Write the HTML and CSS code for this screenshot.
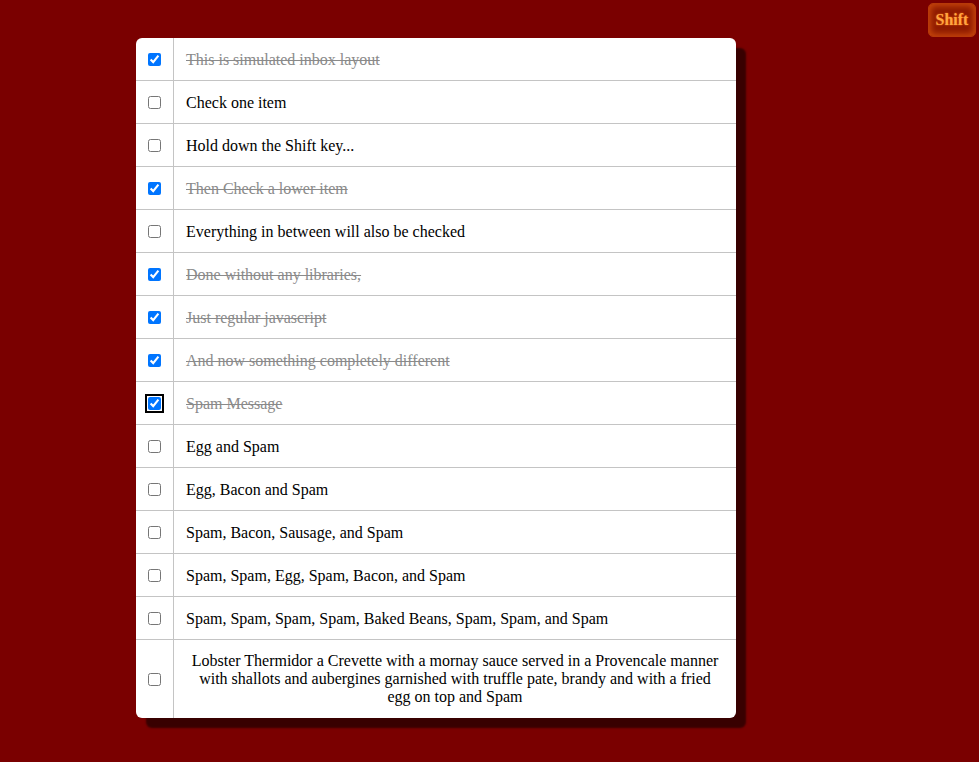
FILE: index.html
```html
<!DOCTYPE html>
<html>
<head>
<meta charset="utf-8">
<link rel="stylesheet" href="styles.css">
</head>
<body>
<div class="shift-key">Shift</div>
<div class="page">
  <div class="inbox">
    <div class="item"><div class="box"><input type="checkbox" checked></div><p>This is simulated inbox layout</p></div>
    <div class="item"><div class="box"><input type="checkbox"></div><p>Check one item</p></div>
    <div class="item"><div class="box"><input type="checkbox"></div><p>Hold down the Shift key...</p></div>
    <div class="item"><div class="box"><input type="checkbox" checked></div><p>Then Check a lower item</p></div>
    <div class="item"><div class="box"><input type="checkbox"></div><p>Everything in between will also be checked</p></div>
    <div class="item"><div class="box"><input type="checkbox" checked></div><p>Done without any libraries,</p></div>
    <div class="item"><div class="box"><input type="checkbox" checked></div><p>Just regular javascript</p></div>
    <div class="item"><div class="box"><input type="checkbox" checked></div><p>And now something completely different</p></div>
    <div class="item"><div class="box"><input type="checkbox" class="focused" checked></div><p>Spam Message</p></div>
    <div class="item"><div class="box"><input type="checkbox"></div><p>Egg and Spam</p></div>
    <div class="item"><div class="box"><input type="checkbox"></div><p>Egg, Bacon and Spam</p></div>
    <div class="item"><div class="box"><input type="checkbox"></div><p>Spam, Bacon, Sausage, and Spam</p></div>
    <div class="item"><div class="box"><input type="checkbox"></div><p>Spam, Spam, Egg, Spam, Bacon, and Spam</p></div>
    <div class="item"><div class="box"><input type="checkbox"></div><p>Spam, Spam, Spam, Spam, Baked Beans, Spam, Spam, and Spam</p></div>
    <div class="item last"><div class="box"><input type="checkbox"></div><p>Lobster Thermidor a Crevette with a mornay sauce served in a Provencale manner with shallots and aubergines garnished with truffle pate, brandy and with a fried egg on top and Spam</p></div>
  </div>
</div>
</body>
</html>
```
FILE: styles.css
```css
html, body {
  margin: 0;
  padding: 0;
}
body {
  background: #7a0000;
  font-family: "Liberation Serif", "Times New Roman", serif;
  font-size: 16px;
  min-height: 762px;
}
.page {
  padding-top: 38px;
  padding-left: 136px;
}
.inbox {
  width: 600px;
  background: #fff;
  border-radius: 6px;
  box-shadow: 10px 10px 2px #380000;
  overflow: hidden;
}
.item {
  display: flex;
  align-items: stretch;
  border-bottom: 1px solid #c4c4c4;
}
.item.last {
  border-bottom: none;
}
.box {
  width: 37px;
  flex: none;
  display: flex;
  align-items: center;
  justify-content: center;
  border-right: 1px solid #c4c4c4;
}
.box input {
  margin: 0;
  width: 13px;
  height: 13px;
  accent-color: #0075ff;
}
.box input.focused {
  outline: 2px solid #000;
  outline-offset: 1px;
  border-radius: 2px;
}
.item p {
  margin: 0;
  padding: 13px 12px 11px 12px;
  line-height: 18px;
  flex: 1;
  color: #000;
}
.item.last p {
  padding: 12px;
  text-align: center;
}
.item:has(input:checked) p {
  text-decoration: line-through;
  color: #8a8a8a;
}
.shift-key {
  position: absolute;
  top: 3px;
  right: 3px;
  width: 48px;
  height: 34px;
  box-sizing: border-box;
  display: flex;
  align-items: center;
  justify-content: center;
  background: #8e1a00;
  border: 1px solid #b83a08;
  border-radius: 5px;
  box-shadow: inset 0 0 6px 2px #c9480c;
  color: #ffa640;
  font-weight: bold;
  font-size: 16px;
  text-shadow: 0 0 2px #ff6a10;
}
```
